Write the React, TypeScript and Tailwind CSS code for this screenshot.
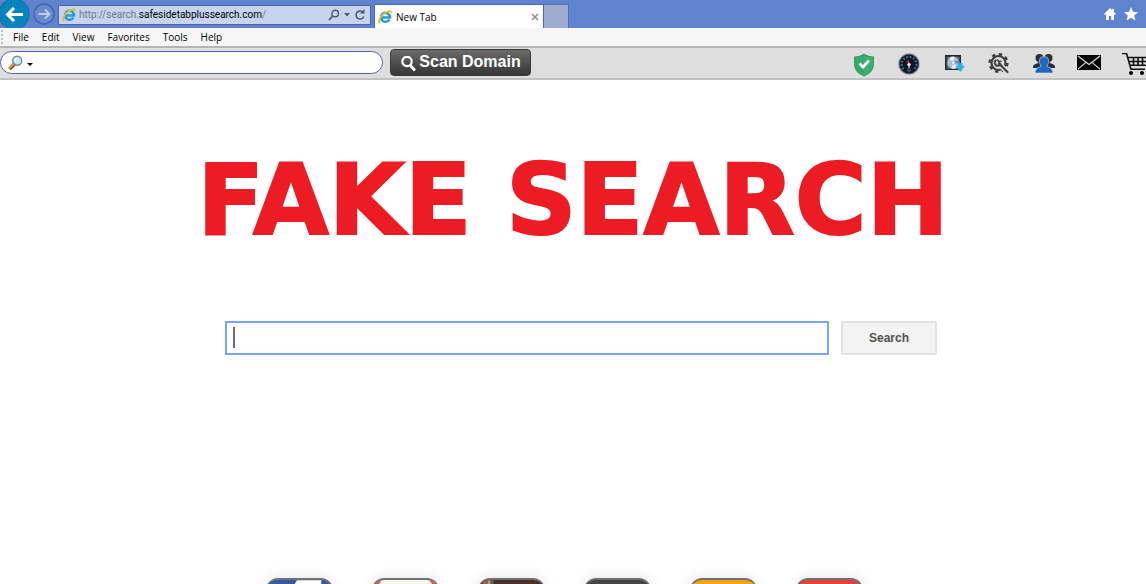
import { useState } from "react";

const menuItems = ["File", "Edit", "View", "Favorites", "Tools", "Help"];

const IeLogo = () => (
  <svg viewBox="0 0 14 14" className="h-3.5 w-3.5 shrink-0" aria-hidden="true">
    <path d="M11.4 9.6A4.5 4.5 0 1 1 12 7.6H4.2" fill="none" stroke="#1f9be0" strokeWidth="2.5" />
    <path d="M3.6 6.2A3.8 3.8 0 0 1 10 5" fill="none" stroke="#6cc8f4" strokeWidth="1" />
    <path d="M2.4 12.8C-.6 12.6 1.4 7.4 5.8 3.8C9.4.9 13.6-.2 13 3.2" fill="none" stroke="#f2b91d" strokeWidth="1.7" />
  </svg>
);

const Shield = () => (
  <svg viewBox="0 0 24 24" className="h-6 w-6" aria-hidden="true">
    <path d="M12 .5Q16 3.5 22 3.5V12Q21 20 12 23.5Q3 20 2 12V3.5Q8 3.5 12 .5Z" fill="#2f9e63" />
    <path d="M12 2Q16 4.5 21 4.5V12Q20 19 12 22.5Z" fill="#3fae72" />
    <path d="M3 4.5Q8 4.5 12 2V22.5Q4 19 3 12Z" fill="#38a86c" />
    <path d="M7.5 10.5L11 14L17 7.5" fill="none" stroke="#fff" strokeWidth="2.6" />
  </svg>
);

const Gauge = () => (
  <svg viewBox="0 0 24 24" className="h-6 w-6" aria-hidden="true">
    <circle cx="12" cy="11" r="11" fill="#b9b9c3" />
    <circle cx="12" cy="11" r="9.8" fill="#14171d" stroke="#5a5b66" strokeWidth="1" />
    <path d="M6.5 16A7.3 7.3 0 1 1 17.5 16" fill="none" stroke="#2f7fd0" strokeWidth="2" strokeDasharray="1.6 1.8" />
    <path d="M12 12L11 7.5" stroke="#ef3535" strokeWidth="1.6" />
    <circle cx="12" cy="11.6" r="1.7" fill="#eee" />
    <path d="M12 12V15.5" stroke="#ddd" strokeWidth="1.2" />
    <rect x="10" y="16.5" width="4" height="2" fill="#1f6296" />
  </svg>
);

const Disc = () => (
  <svg viewBox="0 0 24 24" className="h-6 w-6" aria-hidden="true">
    <path d="M3 2H19V17H3Z" fill="#23272d" />
    <path d="M4.5 3.5H17.5V16H4.5Z" fill="#596575" />
    <circle cx="11.3" cy="9.7" r="6" fill="#aebfdf" />
    <path d="M11.3 9.7L7 5.2A6 6 0 0 1 12.5 3.7ZM11.3 9.7L15.5 14.2A6 6 0 0 1 9.5 15.5Z" fill="#e7f1fc" />
    <path d="M11.3 9.7L16.5 6.7A6 6 0 0 1 17.2 11Z" fill="#718cc1" />
    <circle cx="11.3" cy="9.7" r="1.7" fill="#fff" stroke="#7b8fac" strokeWidth=".6" />
    <path d="M16 10H20.5V13H23L18.3 19L13.3 13H16Z" fill="#24b4df" />
  </svg>
);

const Gear = () => (
  <svg viewBox="0 0 24 24" className="h-6 w-6" aria-hidden="true">
    <circle cx="11.5" cy="10" r="7" fill="none" stroke="#404042" strokeWidth="2.2" />
    <circle cx="11.5" cy="10" r="8.8" fill="none" stroke="#404042" strokeWidth="2.6" strokeDasharray="3.4 3.51" />
    <path d="M14 12.5L21 20" stroke="#dedede" strokeWidth="5" />
    <path d="M12 10.5L20.5 19" stroke="#404042" strokeWidth="2.2" strokeLinecap="round" />
    <path d="M9.4 6.8A3.2 3.2 0 1 0 14 10.5" fill="none" stroke="#404042" strokeWidth="2" />
    <path d="M10.5 6.5L12 9L14.5 8" fill="none" stroke="#404042" strokeWidth="1.6" />
  </svg>
);

const People = () => (
  <svg viewBox="0 0 24 24" className="h-6 w-6" aria-hidden="true">
    <g fill="#303033">
      <circle cx="7.5" cy="5" r="4" />
      <circle cx="16.5" cy="5" r="4" />
      <path d="M1 15Q0 12 5 10.5L8 8H16L19 10.5Q24 12 23 15Z" />
    </g>
    <path d="M3 20Q3 15 9 13.5L7.6 10V6.5Q8 3.5 12 3.5T16.4 6.5V10L15 13.5Q21 15 21 20Z" fill="#1868c6" stroke="#dedede" strokeWidth=".6" />
  </svg>
);

const Mail = () => (
  <svg viewBox="0 0 24 24" className="h-6 w-6" aria-hidden="true">
    <rect y="2" width="24" height="15" fill="#000" />
    <path d="M1 3L12 11.5L23 3M1 16.2L9 9.4M23 16.2L15 9.4" fill="none" stroke="#dedede" strokeWidth="1.1" />
  </svg>
);

const Cart = () => (
  <svg viewBox="0 0 24 24" className="h-6 w-6" aria-hidden="true">
    <path d="M0 .5H4.5L9 16.2H23M5.5 4.5H24M7 8.5H24M8 12.3H24M11.5 4.5V12.5M16 4.5V12.5M20.5 4.5V12.5" fill="none" stroke="#111" strokeWidth="1.6" />
    <circle cx="9" cy="20" r="2" />
    <circle cx="20" cy="20" r="2" />
  </svg>
);

const tools = [
  { name: "Security", icon: Shield },
  { name: "Speed test", icon: Gauge },
  { name: "Downloads", icon: Disc },
  { name: "Settings", icon: Gear },
  { name: "Community", icon: People },
  { name: "Mail", icon: Mail },
  { name: "Shopping", icon: Cart },
];

const tiles = [
  { name: "Facebook", color: "bg-[#3757a0]", detail: <path d="M22 14L31 0H56V14Z" fill="#fff" /> },
  { name: "Gmail", color: "bg-[#f5f5ec]", detail: <path d="M0 0H9L0 12ZM67 0H58L67 12Z" fill="#e5483f" /> },
  {
    name: "Instagram",
    color: "bg-[#4b302a]",
    detail: (
      <>
        <path d="M4 0H9V14H4Z" fill="#a65b4d" />
        <path d="M9 0H12V14H9Z" fill="#c0a04c" />
        <path d="M12 0H15V14H12Z" fill="#536579" />
      </>
    ),
  },
  { name: "News", color: "bg-[#454545]", detail: null },
  { name: "Amazon", color: "bg-[#f8a21b]", detail: null },
  { name: "YouTube", color: "bg-[#dd4339]", detail: null },
];

export default function App() {
  const [address, setAddress] = useState("");
  const [query, setQuery] = useState("");

  return (
    <div className="flex h-screen flex-col overflow-hidden bg-white font-['Open_Sans',sans-serif] text-black">
      {/* Title bar */}
      <header className="flex h-7 shrink-0 items-center overflow-hidden bg-[#5f83cf]">
        <button type="button" aria-label="Back" className="shrink-0">
          <svg viewBox="0 0 30 28" className="h-7 w-[30px]" aria-hidden="true">
            <circle cx="14" cy="14" r="15.5" fill="#0784bd" stroke="#35689f" />
            <path d="M23 14.5H8M14 8L7.5 14.5L14 21" fill="none" stroke="#fff" strokeWidth="3" />
          </svg>
        </button>
        <button type="button" aria-label="Forward" className="ml-[3px] shrink-0">
          <svg viewBox="0 0 22 22" className="h-[22px] w-[22px]" aria-hidden="true">
            <circle cx="11" cy="11" r="10" fill="#6889cc" stroke="#4264ad" strokeWidth="1.4" />
            <path d="M5.5 11H16M12 6.5L16.5 11L12 15.5" fill="none" stroke="#bfcff0" strokeWidth="1.8" />
          </svg>
        </button>
        <div className="ml-[3px] mt-px flex h-5 w-[313px] items-center border border-[#4969ad] bg-[#c7d4f0] pr-1 pl-[3px]">
          <IeLogo />
          <p className="ml-[3px] flex-1 truncate font-['Roboto',sans-serif] text-[10px] leading-4 text-[#6f7789]">
            http://search.<span className="text-black">safesidetabplussearch.com</span>/
          </p>
          <button type="button" aria-label="Search address" className="flex items-center gap-1">
            <svg viewBox="0 0 12 12" className="h-3 w-3" aria-hidden="true">
              <circle cx="7.2" cy="4.5" r="3.3" fill="none" stroke="#4f5664" strokeWidth="1.4" />
              <path d="M4.8 7L1 11" stroke="#4f5664" strokeWidth="1.8" />
            </svg>
            <svg viewBox="0 0 6 4" className="h-1 w-1.5" aria-hidden="true"><path d="M0 0H6L3 3.5Z" fill="#4f5664" /></svg>
          </button>
          <button type="button" aria-label="Refresh" className="ml-1">
            <svg viewBox="0 0 12 12" className="h-3 w-3" aria-hidden="true">
              <path d="M9.5 4A4 4 0 1 0 9.8 7.5" fill="none" stroke="#4f5664" strokeWidth="1.5" />
              <path d="M6 4.5H10.5V0Z" fill="#4f5664" />
            </svg>
          </button>
        </div>
        <div className="ml-[3px] mt-1 flex h-6 w-[170px] items-center border border-b-0 border-[#4969ad] bg-white pr-1 pl-[3px]">
          <IeLogo />
          <span className="ml-1 flex-1 text-[10px] leading-4">New Tab</span>
          <button type="button" aria-label="Close tab">
            <svg viewBox="0 0 8 8" className="h-2 w-2" aria-hidden="true"><path d="M1 1L7 7M7 1L1 7" stroke="#8e8e8e" strokeWidth="1.5" /></svg>
          </button>
        </div>
        <button type="button" aria-label="New tab" className="mt-1 h-6 w-[25px] border border-b-0 border-l-0 border-[#4d6fb6] bg-[#9eacd0]" />
        <div className="ml-auto mr-2 flex items-center gap-2">
          <button type="button" aria-label="Home">
            <svg viewBox="0 0 12 12" className="h-3 w-3" aria-hidden="true">
              <path d="M0 6L6 0L8 2V1H10V4L12 6L11 7L10 6.2V12H7.2V8H4.8V12H2V6.2L1 7Z" fill="#fff" />
            </svg>
          </button>
          <button type="button" aria-label="Favorites">
            <svg viewBox="0 0 14 14" className="h-3.5 w-3.5" aria-hidden="true">
              <path d="M7 0L9 4.8L14 5.3L10.2 8.5L11.4 13.5L7 10.8L2.6 13.5L3.8 8.5L0 5.3L5 4.8Z" fill="#fff" />
            </svg>
          </button>
        </div>
      </header>

      {/* Menu bar */}
      <nav className="flex h-[18px] shrink-0 items-center bg-[#f6f6f6]">
        <span className="ml-px h-3.5 border-l-2 border-dotted border-[#bdbdbd]" />
        <div className="ml-2.5 flex gap-[13px]">
          {menuItems.map((item) => (
            <button key={item} type="button" className="text-[10px] leading-4">
              {item}
            </button>
          ))}
        </div>
      </nav>

      {/* Toolbar */}
      <div className="flex h-[34px] shrink-0 items-center border-b-2 border-t-2 border-b-[#c0c3c6] border-t-[#b5b5b5] bg-[#dedede] pb-px">
        <div className="flex h-[23px] w-[383px] items-center rounded-full border border-[#4a68ad] bg-white pl-[7px] pr-3">
          <svg viewBox="0 0 26 16" className="h-4 w-[26px] shrink-0" aria-hidden="true">
            <path d="M6.5 9L1.5 14" stroke="#5c4320" strokeWidth="3.4" />
            <path d="M6 8.8L1 13.6" stroke="#e2a021" strokeWidth="2" />
            <circle cx="9.2" cy="5.7" r="4.5" fill="#c5ebfa" stroke="#7c8792" strokeWidth="1.5" />
            <path d="M7 6A2.5 2.5 0 0 1 9.5 3.2" fill="none" stroke="#fff" strokeWidth="1.5" />
            <path d="M19 8H25L22 11Z" fill="#000" />
          </svg>
          <input
            type="text"
            aria-label="Toolbar search"
            value={address}
            onChange={(e) => setAddress(e.target.value)}
            className="min-w-0 flex-1 text-xs outline-none"
          />
        </div>
        <button
          type="button"
          className="ml-[7px] flex h-[27px] w-[141px] items-center justify-center gap-[3px] rounded border border-[#3a3a3a] bg-linear-to-b from-[#6b6b6b] to-[#363636] pb-0.5 font-['Liberation_Sans',sans-serif] text-base leading-5 font-bold text-white"
        >
          <svg viewBox="0 0 16 16" className="mt-1 h-4 w-4" aria-hidden="true">
            <circle cx="7" cy="5.5" r="4.7" fill="none" stroke="#fff" strokeWidth="2.2" />
            <path d="M10 9L15 14.5" stroke="#fff" strokeWidth="2.8" />
          </svg>
          Scan Domain
        </button>
        <div className="ml-auto flex gap-[21px] self-end">
          {tools.map(({ name, icon: Icon }) => (
            <button key={name} type="button" aria-label={name}>
              <Icon />
            </button>
          ))}
        </div>
      </div>

      <main className="shrink-0">
        <h1 className="mt-[65px] text-center font-['DejaVu_Sans',sans-serif] text-[98px] leading-[110px] font-bold whitespace-nowrap text-[#ed1c24] [-webkit-text-stroke:2px_#ed1c24]">
          FAKE SEARCH
        </h1>

        <form className="mt-[66px] flex justify-center gap-3 pl-4" onSubmit={(e) => e.preventDefault()}>
          <div className="relative w-full max-w-[604px]">
            <input
              type="text"
              aria-label="Search"
              autoFocus
              value={query}
              onChange={(e) => setQuery(e.target.value)}
              className={`block h-[34px] w-full border-2 border-[#76a6f5] bg-white px-1.5 text-xl outline-none ${query === "" ? "caret-transparent" : "caret-[#6b6b6b]"}`}
            />
            {query === "" && <span className="pointer-events-none absolute top-1.5 left-2 h-[21px] w-0.5 bg-[#6b6b6b]" />}
          </div>
          <button
            type="submit"
            className="h-[34px] w-24 rounded-xs border-2 border-[#e2e2e2] bg-[#f3f3f3] font-['Liberation_Sans',sans-serif] text-xs font-bold text-[#505050]"
          >
            Search
          </button>
        </form>

        {/* Shortcuts */}
        <div className="mt-[223px] flex justify-center gap-[39px] pr-[18px]">
          {tiles.map(({ name, color, detail }) => (
            <a
              key={name}
              href="#"
              aria-label={name}
              className={`h-[67px] w-[67px] overflow-hidden rounded-xl border border-t-2 border-[#6f7472] shadow-[0_0_14px_rgba(0,0,0,0.12)] ${color}`}
            >
              <svg viewBox="0 0 67 14" className="h-3.5 w-full" aria-hidden="true">{detail}</svg>
            </a>
          ))}
        </div>
      </main>
    </div>
  );
}
